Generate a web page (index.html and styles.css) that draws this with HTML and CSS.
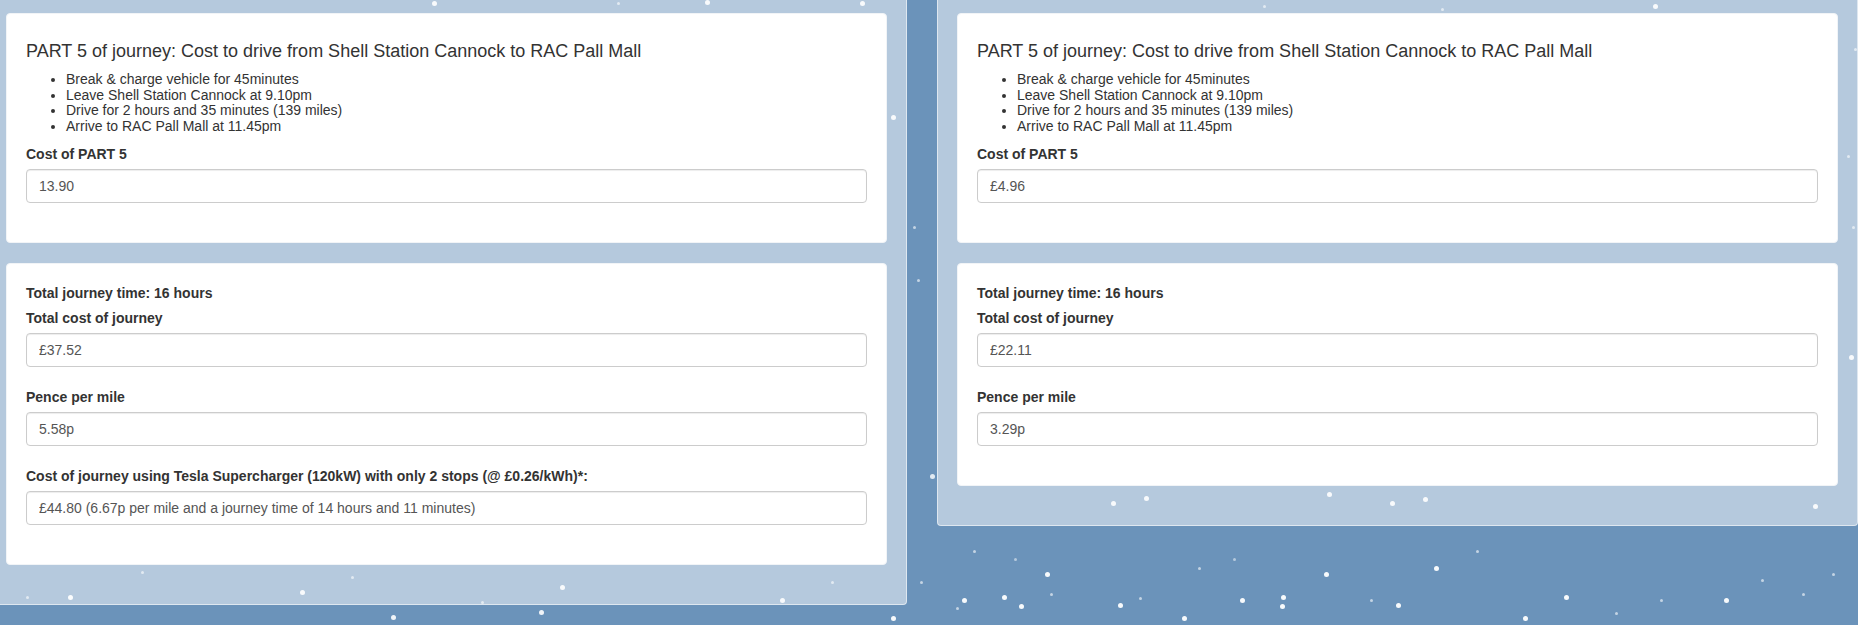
FILE: index.html
```html
<!DOCTYPE html>
<html lang="en">
<head>
<meta charset="utf-8">
<title>Journey cost</title>
<link rel="stylesheet" href="styles.css">
</head>
<body>
<div class="snow"></div>
<div class="columns">
  <section class="panel">
    <div class="card">
      <h4 class="card-title">PART 5 of journey: Cost to drive from Shell Station Cannock to RAC Pall Mall</h4>
      <ul class="steps">
        <li>Break &amp; charge vehicle for 45minutes</li>
        <li>Leave Shell Station Cannock at 9.10pm</li>
        <li>Drive for 2 hours and 35 minutes (139 miles)</li>
        <li>Arrive to RAC Pall Mall at 11.45pm</li>
      </ul>
      <div class="form-group">
        <label class="field-label">Cost of PART 5</label>
        <input class="form-control" type="text" value="13.90" readonly>
      </div>
    </div>
    <div class="card">
      <div class="field-label">Total journey time: 16 hours</div>
      <div class="form-group">
        <label class="field-label">Total cost of journey</label>
        <input class="form-control" type="text" value="£37.52" readonly>
      </div>
      <div class="form-group">
        <label class="field-label">Pence per mile</label>
        <input class="form-control" type="text" value="5.58p" readonly>
      </div>
      <div class="form-group">
        <label class="field-label">Cost of journey using Tesla Supercharger (120kW) with only 2 stops (@ £0.26/kWh)*:</label>
        <input class="form-control" type="text" value="£44.80 (6.67p per mile and a journey time of 14 hours and 11 minutes)" readonly>
      </div>
    </div>
  </section>
  <section class="panel">
    <div class="card">
      <h4 class="card-title">PART 5 of journey: Cost to drive from Shell Station Cannock to RAC Pall Mall</h4>
      <ul class="steps">
        <li>Break &amp; charge vehicle for 45minutes</li>
        <li>Leave Shell Station Cannock at 9.10pm</li>
        <li>Drive for 2 hours and 35 minutes (139 miles)</li>
        <li>Arrive to RAC Pall Mall at 11.45pm</li>
      </ul>
      <div class="form-group">
        <label class="field-label">Cost of PART 5</label>
        <input class="form-control" type="text" value="£4.96" readonly>
      </div>
    </div>
    <div class="card">
      <div class="field-label">Total journey time: 16 hours</div>
      <div class="form-group">
        <label class="field-label">Total cost of journey</label>
        <input class="form-control" type="text" value="£22.11" readonly>
      </div>
      <div class="form-group">
        <label class="field-label">Pence per mile</label>
        <input class="form-control" type="text" value="3.29p" readonly>
      </div>
    </div>
  </section>
</div>
</body>
</html>
```
FILE: styles.css
```css
html, body {
  margin: 0;
  padding: 0;
}
body {
  background: #6b93ba;
  font-family: "Liberation Sans", Arial, sans-serif;
  font-size: 14px;
  line-height: 1.42857;
  color: #333;
  overflow: hidden;
  height: 625px;
  position: relative;
}
.snow {
  position: absolute;
  left: 0;
  top: 0;
  width: 5px;
  height: 5px;
  border-radius: 50%;
  z-index: 0;
  box-shadow:
    891px 115px 0 0 rgba(255,255,255,.9),
    912px 225px 0 -1px rgba(255,255,255,.6),
    916px 278px 0 -1px rgba(255,255,255,.6),
    930px 474px 0 0 rgba(255,255,255,.8),
    1327px 492px 0 0 rgba(255,255,255,.9),
    1394px 448px 0 -1px rgba(255,255,255,.7),
    391px 615px 0 0 rgba(255,255,255,.9),
    539px 610px 0 0 rgba(255,255,255,.9),
    972px 549px 0 -1px rgba(255,255,255,.6),
    1013px 557px 0 -1px rgba(255,255,255,.5),
    1019px 604px 0 0 rgba(255,255,255,.95),
    1049px 592px 0 -1px rgba(255,255,255,.6),
    1138px 596px 0 -1px rgba(255,255,255,.6),
    1197px 566px 0 -1px rgba(255,255,255,.6),
    1232px 557px 0 -1px rgba(255,255,255,.5),
    1280px 604px 0 0 rgba(255,255,255,.95),
    1369px 598px 0 -1px rgba(255,255,255,.6),
    1434px 566px 0 0 rgba(255,255,255,.95),
    1475px 549px 0 -1px rgba(255,255,255,.6),
    1523px 616px 0 0 rgba(255,255,255,.95),
    1564px 595px 0 0 rgba(255,255,255,.95),
    1614px 611px 0 -1px rgba(255,255,255,.6),
    1659px 598px 0 -1px rgba(255,255,255,.6),
    1724px 598px 0 0 rgba(255,255,255,.95),
    1760px 578px 0 -1px rgba(255,255,255,.6),
    1801px 592px 0 -1px rgba(255,255,255,.6),
    1831px 572px 0 -1px rgba(255,255,255,.6),
    1849px 355px 0 0 rgba(255,255,255,.9),
    1851px 225px 0 -1px rgba(255,255,255,.6),
    1846px 154px 0 -1px rgba(255,255,255,.6),
    1853px 47px 0 -1px rgba(255,255,255,.6),
    1653px 4px 0 0 rgba(255,255,255,.9),
    1440px 7px 0 -1px rgba(255,255,255,.6),
    1262px 4px 0 -1px rgba(255,255,255,.6),
    705px 0px 0 0 rgba(255,255,255,.9),
    616px 1px 0 -1px rgba(255,255,255,.6),
    1813px 504px 0 0 rgba(255,255,255,.9),
    68px 595px 0 0 rgba(255,255,255,.95),
    25px 595px 0 -1px rgba(255,255,255,.6),
    891px 616px 0 0 rgba(255,255,255,.95),
    919px 580px 0 -1px rgba(255,255,255,.6),
    955px 606px 0 -1px rgba(255,255,255,.6),
    1045px 572px 0 0 rgba(255,255,255,.95),
    962px 598px 0 0 rgba(255,255,255,.95),
    1002px 595px 0 0 rgba(255,255,255,.95),
    1118px 603px 0 0 rgba(255,255,255,.95),
    1182px 616px 0 0 rgba(255,255,255,.95),
    1240px 598px 0 0 rgba(255,255,255,.95),
    1281px 595px 0 0 rgba(255,255,255,.95),
    1324px 572px 0 0 rgba(255,255,255,.95),
    1396px 603px 0 0 rgba(255,255,255,.95),
    1423px 497px 0 0 rgba(255,255,255,.9),
    1390px 501px 0 0 rgba(255,255,255,.9),
    1144px 496px 0 0 rgba(255,255,255,.9),
    1111px 501px 0 0 rgba(255,255,255,.9),
    140px 570px 0 -1px rgba(255,255,255,.6),
    300px 590px 0 0 rgba(255,255,255,.9),
    350px 575px 0 -1px rgba(255,255,255,.6),
    480px 600px 0 -1px rgba(255,255,255,.6),
    560px 585px 0 0 rgba(255,255,255,.9),
    700px 560px 0 -1px rgba(255,255,255,.6),
    780px 598px 0 0 rgba(255,255,255,.9),
    830px 580px 0 -1px rgba(255,255,255,.6),
    432px 1px 0 0 rgba(255,255,255,.9),
    860px 1px 0 0 rgba(255,255,255,.9);
}
.columns {
  position: relative;
  z-index: 1;
  display: flex;
  align-items: flex-start;
  gap: 30px;
  margin: -7px 0 0 -14px;
}
.panel {
  flex: 0 0 921px;
  box-sizing: border-box;
  background: rgba(255, 255, 255, 0.5);
  border: 1px solid rgba(255, 255, 255, 0.55);
  border-radius: 4px;
  padding: 19px 19px 19px;
}
.card {
  background: #fff;
  border: 1px solid #f1f4f7;
  border-radius: 4px;
  padding: 19px 19px 19px;
  margin-bottom: 20px;
}
.card-title {
  margin: 9px 0 10px;
  font-size: 18px;
  font-weight: 500;
  line-height: 1.1;
  color: #333;
}
.steps {
  margin: 0 0 9px;
  padding-left: 40px;
  line-height: 15.7px;
}
.field-label {
  display: block;
  font-weight: bold;
  margin-bottom: 5px;
  line-height: 20px;
}
.form-group {
  margin-bottom: 20px;
}
.form-control {
  display: block;
  width: 100%;
  height: 34px;
  box-sizing: border-box;
  padding: 6px 12px;
  font-family: "Liberation Sans", Arial, sans-serif;
  font-size: 14px;
  line-height: 1.42857;
  color: #555;
  background: #fff;
  border: 1px solid #ccc;
  border-radius: 4px;
  box-shadow: inset 0 1px 1px rgba(0, 0, 0, 0.075);
  outline: none;
  margin: 0;
}
```
